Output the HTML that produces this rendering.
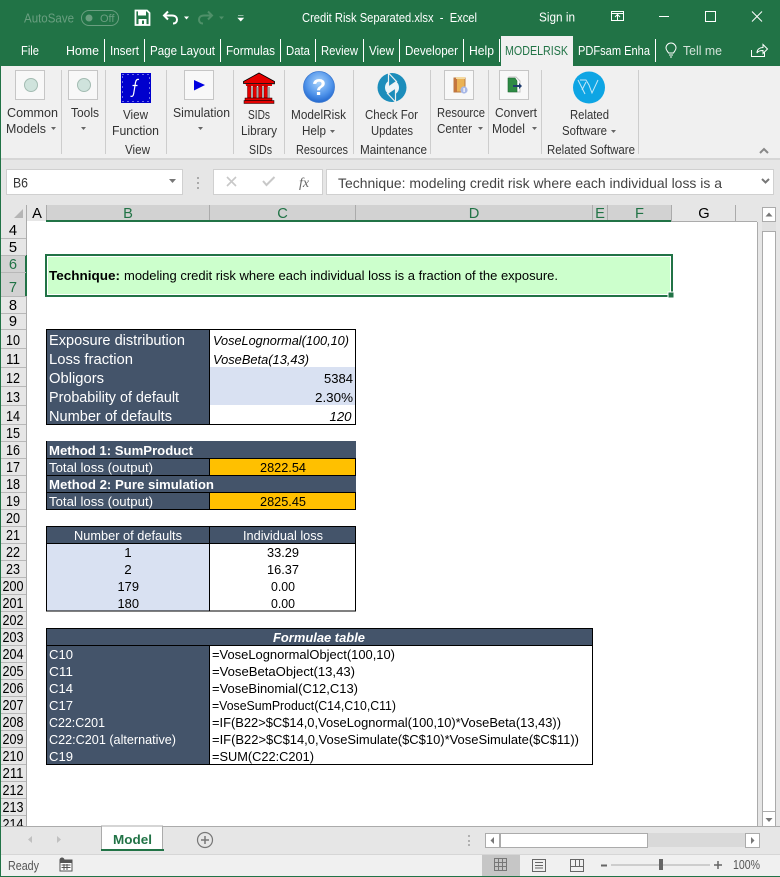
<!DOCTYPE html>
<html><head><meta charset="utf-8"><title>Credit Risk Separated.xlsx - Excel</title>
<style>
html,body{margin:0;padding:0;background:#fff;width:780px;height:877px;overflow:hidden}
svg{display:block}
text{font-family:"Liberation Sans",sans-serif;white-space:pre}
.t{fill:#fff;font-size:13px}
.rb{fill:#333;font-size:13px}
.hd{fill:#000;font-size:14.67px;text-anchor:middle}
.hs{fill:#217346;font-size:14.67px;text-anchor:middle}
.rw{fill:#000;font-size:14.67px;text-anchor:middle}
.rs{fill:#217346;font-size:14.67px;text-anchor:middle}
.w{fill:#fff;font-size:14.67px}
.w2{fill:#fff;font-size:13.33px}
.b{fill:#000;font-size:13.33px}
.m{text-anchor:middle}
.e{text-anchor:end}
</style></head><body>
<svg xmlns="http://www.w3.org/2000/svg" width="780" height="877" viewBox="0 0 780 877">
<rect width="780" height="877" fill="#fff"/>
<!-- title bar -->
<rect width="780" height="66" fill="#217346"/>
<text x="24" y="22.500" font-size="13" fill="#6a9f80" textLength="50" lengthAdjust="spacingAndGlyphs">AutoSave</text>
<rect x="81.500" y="10.500" width="37" height="15" rx="7.500" fill="none" stroke="#6a9f80"/>
<circle cx="89" cy="18" r="3.500" fill="#6a9f80"/>
<text x="100" y="22" font-size="11" fill="#6a9f80">Off</text>
<path d="M135.500 10.500h11.500l2.500 2.500v12h-14z" fill="none" stroke="#fff" stroke-width="1.800"/>
<rect x="138" y="11" width="8" height="4.500" fill="#fff"/><rect x="138.500" y="19" width="8" height="6" fill="#fff"/><rect x="142" y="20.500" width="2" height="3.500" fill="#217346"/>
<path d="M168 11.500l-4 4 4 4M164 15.500h8c3.500 0 5 2 5 4s-1 4-4 4" fill="none" stroke="#fff" stroke-width="2"/>
<path d="M184 16.500h5l-2.500 3z" fill="#fff"/>
<path d="M208 11.500l4 4-4 4M212 15.500h-8c-3.500 0-5 2-5 4s1 4 4 4" fill="none" stroke="#4f9069" stroke-width="2"/>
<path d="M219 16.500h5l-2.500 3z" fill="#4f9069"/>
<path d="M238 15.500h5.500M238 18h5.500l-2.750 3z" fill="#fff" stroke="#fff" stroke-width=".6"/>
<text x="302" y="22" class="t" textLength="175" lengthAdjust="spacingAndGlyphs">Credit Risk Separated.xlsx  -  Excel</text>
<text x="539" y="21.500" class="t" textLength="36" lengthAdjust="spacingAndGlyphs">Sign in</text>
<rect x="611.500" y="11.500" width="12" height="9" fill="none" stroke="#fff"/><path d="M611.500 13.500h12M617.500 20v-5M615 17l2.500-2.500 2.500 2.500" fill="none" stroke="#fff"/>
<rect x="659" y="16" width="10" height="1" fill="#fff"/>
<rect x="705.500" y="11.500" width="10" height="10" fill="none" stroke="#fff"/>
<path d="M752 11.500l10 10M762 11.500l-10 10" stroke="#fff" fill="none"/>
<!-- tabs -->
<text x="21" y="55" class="t" textLength="18" lengthAdjust="spacingAndGlyphs">File</text>
<text x="66" y="55" class="t" textLength="33" lengthAdjust="spacingAndGlyphs">Home</text>
<text x="110" y="55" class="t" textLength="29" lengthAdjust="spacingAndGlyphs">Insert</text>
<text x="150" y="55" class="t" textLength="65" lengthAdjust="spacingAndGlyphs">Page Layout</text>
<text x="226" y="55" class="t" textLength="49" lengthAdjust="spacingAndGlyphs">Formulas</text>
<text x="286" y="55" class="t" textLength="24" lengthAdjust="spacingAndGlyphs">Data</text>
<text x="321" y="55" class="t" textLength="37" lengthAdjust="spacingAndGlyphs">Review</text>
<text x="369" y="55" class="t" textLength="25" lengthAdjust="spacingAndGlyphs">View</text>
<text x="405" y="55" class="t" textLength="53" lengthAdjust="spacingAndGlyphs">Developer</text>
<text x="469" y="55" class="t" textLength="25" lengthAdjust="spacingAndGlyphs">Help</text>
<text x="578" y="55" class="t" textLength="72" lengthAdjust="spacingAndGlyphs">PDFsam Enha</text>
<text x="683" y="55" font-size="13" fill="#d3e3d9" textLength="39" lengthAdjust="spacingAndGlyphs">Tell me</text>
<g fill="#fff"><rect x="104" y="39" width="1" height="23"/><rect x="144" y="39" width="1" height="23"/><rect x="220" y="39" width="1" height="23"/><rect x="280" y="39" width="1" height="23"/><rect x="315" y="39" width="1" height="23"/><rect x="363" y="39" width="1" height="23"/><rect x="399" y="39" width="1" height="23"/><rect x="463" y="39" width="1" height="23"/><rect x="499" y="39" width="1" height="23"/><rect x="655" y="39" width="1" height="23"/></g>
<path d="M668.500 53c-1-2-2.500-3-2.500-5a5 5 0 0 1 10 0c0 2-1.500 3-2.500 5zM669 55h4M670 57h2" fill="none" stroke="#fff"/>
<path d="M751.500 50v6.500h13v-4M757 53c0-4 3-5.500 6-5.500v-3l4.500 4.500-4.500 4.500v-3c-3 0-5 .5-6 2.500z" fill="none" stroke="#fff"/>
<!-- ribbon -->
<rect x="0" y="66" width="780" height="92" fill="#f0f0f0"/>
<rect x="501" y="36" width="72" height="31" fill="#f0f0f0"/>
<text x="505" y="55" font-size="13" fill="#217346" textLength="63" lengthAdjust="spacingAndGlyphs">MODELRISK</text>
<rect x="0" y="158" width="780" height="2" fill="#d6d6d6"/>
<g fill="#cdcdcd"><rect x="61" y="70" width="1" height="84"/><rect x="105" y="70" width="1" height="84"/><rect x="166" y="70" width="1" height="84"/><rect x="233" y="70" width="1" height="84"/><rect x="284" y="70" width="1" height="84"/><rect x="353" y="70" width="1" height="84"/><rect x="430" y="70" width="1" height="84"/><rect x="488" y="70" width="1" height="84"/><rect x="541" y="70" width="1" height="84"/><rect x="638" y="70" width="1" height="84"/></g>
<!-- ribbon icons -->
<g fill="#f8f8f8" stroke="#c6c6c6"><rect x="15.500" y="70.500" width="29" height="29"/><rect x="68.500" y="70.500" width="29" height="29"/><rect x="184.500" y="70.500" width="29" height="29"/><rect x="444.500" y="70.500" width="29" height="29"/><rect x="499.500" y="70.500" width="29" height="29"/></g>
<circle cx="31" cy="85" r="6.500" fill="#cfe3dc" stroke="#a3bcb2"/>
<circle cx="84" cy="85" r="6.500" fill="#cfe3dc" stroke="#a3bcb2"/>
<rect x="121" y="73" width="30" height="30" fill="#0000cd"/>
<path d="M122.500 74.500h27v27h-27z" fill="none" stroke="#d8d8ff" stroke-dasharray="1 4"/>
<path d="M139 79.500c-2-.5-3 .5-3.500 3l-1.800 11c-.4 2.500-1.500 3.500-3.200 2.500M132.500 85.500h5" fill="none" stroke="#fff" stroke-width="1.200"/>
<path d="M194 80l11 5-11 5.500z" fill="#0000e0"/>
<!-- SIDs temple -->
<path d="M245 83l14-8 16 8v1.500h-30z" fill="#9a9a9a"/>
<path d="M243.500 81.500l15.500-8.500 15.500 8.500v2h-31z" fill="#e60000" stroke="#000" stroke-width=".8"/>
<rect x="246" y="84" width="26" height="2" fill="#e60000"/>
<g fill="#e60000" stroke="#600" stroke-width=".5"><rect x="247.500" y="86" width="3.500" height="12"/><rect x="253" y="86" width="3.500" height="12"/><rect x="258.500" y="86" width="3.500" height="12"/><rect x="264" y="86" width="3.500" height="12"/></g>
<g fill="#a8a8a8"><rect x="251" y="87" width="2" height="11"/><rect x="256.500" y="87" width="2" height="11"/><rect x="262" y="87" width="2" height="11"/><rect x="267.500" y="87" width="2.500" height="11"/></g>
<rect x="245" y="98" width="27" height="2.500" fill="#e60000" stroke="#000" stroke-width=".5"/><rect x="244" y="100.500" width="30" height="3" fill="#e60000" stroke="#000" stroke-width=".5"/>
<!-- help globe -->
<defs><radialGradient id="g" cx=".5" cy=".35" r=".7"><stop offset="0" stop-color="#a9d3fb"/><stop offset=".6" stop-color="#4f93ea"/><stop offset="1" stop-color="#1a5fc8"/></radialGradient></defs>
<circle cx="319" cy="87" r="15.500" fill="url(#g)" stroke="#3a78d0" stroke-width=".8"/>
<text x="319" y="95" font-size="23" font-weight="bold" fill="#fff" text-anchor="middle">?</text>
<!-- update -->
<circle cx="392" cy="87.500" r="14.500" fill="#1c8dbb"/>
<ellipse cx="392" cy="87.500" rx="7" ry="7.500" fill="#eaf5fa"/>
<path d="M388.500 73l8 8.500-8 5.500z" fill="#1c8dbb" stroke="#f0f0f0" stroke-width="1.200"/>
<path d="M395.500 102l-8-8.500 8-5.500z" fill="#1c8dbb" stroke="#f0f0f0" stroke-width="1.200"/>
<!-- book -->
<rect x="454" y="78" width="11" height="14" fill="#eab255" stroke="#b87a45"/><rect x="454" y="78" width="3" height="14" fill="#c4763f"/><rect x="456" y="77" width="9" height="2" fill="#f4d9a0"/>
<circle cx="464" cy="90" r="3.600" fill="#a8b8e8"/><rect x="463.500" y="88" width="1.200" height="4" fill="#fff"/>
<!-- convert -->
<path d="M509 77h7l4 4v11h-11z" fill="#fff" stroke="#c2c2c2"/>
<path d="M508 78h7l2 3v11h-9z" fill="#2e8b45" stroke="#1b6a30" stroke-width=".6"/>
<path d="M513 85h6v-2l3 3-3 3v-2h-6z" fill="#1f3c6e"/>
<!-- related -->
<circle cx="589" cy="87.500" r="16" fill="#0ea5e4"/>
<path d="M580 80h6l3 5 3 8 6-13M578 80l7 14M582 90l4-8" fill="none" stroke="#c4e8f8" stroke-width="1"/>
<!-- ribbon text -->
<text x="7" y="117" class="rb" textLength="51" lengthAdjust="spacingAndGlyphs">Common</text>
<text x="6" y="133" class="rb" textLength="40" lengthAdjust="spacingAndGlyphs">Models</text>
<text x="71" y="117" class="rb" textLength="28" lengthAdjust="spacingAndGlyphs">Tools</text>
<text x="123" y="119" class="rb" textLength="25" lengthAdjust="spacingAndGlyphs">View</text>
<text x="112" y="135" class="rb" textLength="47" lengthAdjust="spacingAndGlyphs">Function</text>
<text x="125" y="154" class="rb" textLength="25" lengthAdjust="spacingAndGlyphs">View</text>
<text x="173" y="117" class="rb" textLength="57" lengthAdjust="spacingAndGlyphs">Simulation</text>
<text x="248" y="119" class="rb" textLength="22" lengthAdjust="spacingAndGlyphs">SIDs</text>
<text x="241" y="135" class="rb" textLength="36" lengthAdjust="spacingAndGlyphs">Library</text>
<text x="249" y="154" class="rb" textLength="23" lengthAdjust="spacingAndGlyphs">SIDs</text>
<text x="291" y="119" class="rb" textLength="55" lengthAdjust="spacingAndGlyphs">ModelRisk</text>
<text x="302" y="135" class="rb" textLength="24" lengthAdjust="spacingAndGlyphs">Help</text>
<text x="296" y="154" class="rb" textLength="52" lengthAdjust="spacingAndGlyphs">Resources</text>
<text x="365" y="119" class="rb" textLength="53" lengthAdjust="spacingAndGlyphs">Check For</text>
<text x="371" y="135" class="rb" textLength="42" lengthAdjust="spacingAndGlyphs">Updates</text>
<text x="360" y="154" class="rb" textLength="67" lengthAdjust="spacingAndGlyphs">Maintenance</text>
<text x="437" y="117" class="rb" textLength="48" lengthAdjust="spacingAndGlyphs">Resource</text>
<text x="437" y="133" class="rb" textLength="35" lengthAdjust="spacingAndGlyphs">Center</text>
<text x="495" y="117" class="rb" textLength="42" lengthAdjust="spacingAndGlyphs">Convert</text>
<text x="492" y="133" class="rb" textLength="33" lengthAdjust="spacingAndGlyphs">Model</text>
<text x="570" y="119" class="rb" textLength="39" lengthAdjust="spacingAndGlyphs">Related</text>
<text x="562" y="135" class="rb" textLength="45" lengthAdjust="spacingAndGlyphs">Software</text>
<text x="547" y="154" class="rb" textLength="88" lengthAdjust="spacingAndGlyphs">Related Software</text>
<g fill="#666"><path d="M51 127h5l-2.500 3z"/><path d="M81 127h5l-2.500 3z"/><path d="M198 127h5l-2.500 3z"/><path d="M330 130h5l-2.500 3z"/><path d="M478 127h5l-2.500 3z"/><path d="M532 127h5l-2.500 3z"/><path d="M611 130h5l-2.500 3z"/></g>
<path d="M760 153l4-4 4 4" fill="none" stroke="#888" stroke-width="2"/>
<!-- formula bar -->
<rect x="0" y="160" width="780" height="61" fill="#e6e6e6"/>
<rect x="6.500" y="169.500" width="176" height="25" fill="#fff" stroke="#d0d0d0"/>
<text x="13" y="187.500" font-size="14" fill="#333" textLength="15" lengthAdjust="spacingAndGlyphs">B6</text>
<path d="M169 179h7l-3.500 4z" fill="#777"/>
<g fill="#aaa"><rect x="197" y="177" width="2" height="2"/><rect x="197" y="182" width="2" height="2"/><rect x="197" y="187" width="2" height="2"/></g>
<rect x="213.500" y="169.500" width="109" height="25" fill="#fff" stroke="#d0d0d0"/>
<path d="M227 177l9 9M236 177l-9 9" stroke="#c8c8c8" stroke-width="1.600" fill="none"/>
<path d="M263 181l3.500 4 8-8" stroke="#c8c8c8" stroke-width="2" fill="none"/>
<text x="299" y="187" font-size="14" font-style="italic" style="font-family:'Liberation Serif',serif" fill="#666">fx</text>
<rect x="326.500" y="169.500" width="447" height="25" fill="#fff" stroke="#d0d0d0"/>
<text x="338" y="188" font-size="14" fill="#444" textLength="384" lengthAdjust="spacingAndGlyphs">Technique: modeling credit risk where each individual loss is a</text>
<path d="M762 179l3.500 3.500 3.500-3.500" fill="none" stroke="#777" stroke-width="2"/>
<!-- column headers -->
<path d="M14 218h9v-9z" fill="#b5b5b5"/>
<rect x="46" y="205" width="625" height="15" fill="#d2d2d2"/>
<rect x="46" y="220" width="625" height="2" fill="#217346"/>
<rect x="671" y="221" width="86" height="1" fill="#ababab"/>
<g fill="#ababab"><rect x="26" y="205" width="1" height="16"/><rect x="46" y="205" width="1" height="15"/><rect x="209" y="205" width="1" height="15"/><rect x="355" y="205" width="1" height="15"/><rect x="592" y="205" width="1" height="15"/><rect x="607" y="205" width="1" height="15"/><rect x="671" y="205" width="1" height="16"/><rect x="735" y="205" width="1" height="16"/></g>
<text x="37" y="218" class="hd">A</text>
<text x="128" y="218" class="hs">B</text>
<text x="282.500" y="218" class="hs">C</text>
<text x="474" y="218" class="hs">D</text>
<text x="600" y="218" class="hs">E</text>
<text x="639.500" y="218" class="hs">F</text>
<text x="704" y="218" class="hd">G</text>
<!-- row headers -->
<rect x="1" y="221" width="25" height="606" fill="#e6e6e6"/>
<rect x="1" y="255" width="25" height="41" fill="#d2d2d2"/>
<rect x="25" y="255" width="2" height="41" fill="#217346"/>
<rect x="0" y="66" width="1" height="811" fill="#217346"/>
<path d="M1 238.500h25M1 255.500h25M1 272.500h25M1 296.500h25M1 313.500h25M1 329.500h25M1 348.500h25M1 367.500h25M1 386.500h25M1 405.500h25M1 424.500h25M1 441.500h25M1 458.500h25M1 475.500h25M1 492.500h25M1 509.500h25M1 526.500h25M1 543.500h25M1 560.500h25M1 577.500h25M1 594.500h25M1 611.500h25M1 628.500h25M1 645.500h25M1 662.500h25M1 679.500h25M1 696.500h25M1 713.500h25M1 730.500h25M1 747.500h25M1 764.500h25M1 781.500h25M1 798.500h25M1 815.500h25" stroke="#b8b8b8" fill="none"/>
<rect x="26" y="221" width="1" height="34" fill="#ababab"/><rect x="26" y="296" width="1" height="531" fill="#ababab"/>
<text x="13" y="235" class="rw">4</text><text x="13" y="252" class="rw">5</text>
<text x="13" y="269" class="rs">6</text><text x="13" y="292" class="rs">7</text>
<text x="13" y="310" class="rw">8</text><text x="13" y="326" class="rw">9</text>
<text x="13" y="345" class="rw" textLength="14" lengthAdjust="spacingAndGlyphs">10</text><text x="13" y="364" class="rw" textLength="14" lengthAdjust="spacingAndGlyphs">11</text><text x="13" y="383" class="rw" textLength="14" lengthAdjust="spacingAndGlyphs">12</text><text x="13" y="402" class="rw" textLength="14" lengthAdjust="spacingAndGlyphs">13</text><text x="13" y="421" class="rw" textLength="14" lengthAdjust="spacingAndGlyphs">14</text>
<text x="13" y="438" class="rw" textLength="14" lengthAdjust="spacingAndGlyphs">15</text><text x="13" y="455" class="rw" textLength="14" lengthAdjust="spacingAndGlyphs">16</text><text x="13" y="472" class="rw" textLength="14" lengthAdjust="spacingAndGlyphs">17</text><text x="13" y="489" class="rw" textLength="14" lengthAdjust="spacingAndGlyphs">18</text><text x="13" y="506" class="rw" textLength="14" lengthAdjust="spacingAndGlyphs">19</text><text x="13" y="523" class="rw" textLength="14" lengthAdjust="spacingAndGlyphs">20</text>
<text x="13" y="540" class="rw" textLength="14" lengthAdjust="spacingAndGlyphs">21</text><text x="13" y="557" class="rw" textLength="14" lengthAdjust="spacingAndGlyphs">22</text><text x="13" y="574" class="rw" textLength="14" lengthAdjust="spacingAndGlyphs">23</text>
<text x="13" y="591" class="rw" textLength="21" lengthAdjust="spacingAndGlyphs">200</text><text x="13" y="608" class="rw" textLength="21" lengthAdjust="spacingAndGlyphs">201</text><text x="13" y="625" class="rw" textLength="21" lengthAdjust="spacingAndGlyphs">202</text><text x="13" y="642" class="rw" textLength="21" lengthAdjust="spacingAndGlyphs">203</text><text x="13" y="659" class="rw" textLength="21" lengthAdjust="spacingAndGlyphs">204</text><text x="13" y="676" class="rw" textLength="21" lengthAdjust="spacingAndGlyphs">205</text><text x="13" y="693" class="rw" textLength="21" lengthAdjust="spacingAndGlyphs">206</text><text x="13" y="710" class="rw" textLength="21" lengthAdjust="spacingAndGlyphs">207</text><text x="13" y="727" class="rw" textLength="21" lengthAdjust="spacingAndGlyphs">208</text><text x="13" y="744" class="rw" textLength="21" lengthAdjust="spacingAndGlyphs">209</text><text x="13" y="761" class="rw" textLength="21" lengthAdjust="spacingAndGlyphs">210</text><text x="13" y="778" class="rw" textLength="21" lengthAdjust="spacingAndGlyphs">211</text><text x="13" y="795" class="rw" textLength="21" lengthAdjust="spacingAndGlyphs">212</text><text x="13" y="812" class="rw" textLength="21" lengthAdjust="spacingAndGlyphs">213</text><text x="13" y="829" class="rw" textLength="21" lengthAdjust="spacingAndGlyphs">214</text>
<!-- green box -->
<rect x="46" y="255" width="626" height="41" fill="#ccffcc" stroke="#217346" stroke-width="2"/>
<rect x="47.500" y="256.500" width="623" height="38" fill="none" stroke="#fff"/>
<rect x="668" y="292" width="6" height="6" fill="#217346" stroke="#fff"/>
<text x="49" y="280" font-size="13" font-weight="bold" fill="#000" textLength="71" lengthAdjust="spacingAndGlyphs">Technique:</text>
<text x="124" y="280" font-size="13" fill="#000" textLength="434" lengthAdjust="spacingAndGlyphs">modeling credit risk where each individual loss is a fraction of the exposure.</text>
<!-- table 1 -->
<rect x="46" y="329" width="164" height="96" fill="#44546a"/>
<rect x="210" y="367" width="145" height="38" fill="#d9e1f2"/>
<rect x="46.500" y="329.500" width="309" height="95" fill="none" stroke="#000"/>
<rect x="209" y="329" width="1" height="96" fill="#000"/>
<text x="49" y="345" class="w" textLength="136" lengthAdjust="spacingAndGlyphs">Exposure distribution</text>
<text x="49" y="364" class="w" textLength="84" lengthAdjust="spacingAndGlyphs">Loss fraction</text>
<text x="49" y="383" class="w" textLength="55" lengthAdjust="spacingAndGlyphs">Obligors</text>
<text x="49" y="402" class="w" textLength="130" lengthAdjust="spacingAndGlyphs">Probability of default</text>
<text x="49" y="421" class="w" textLength="123" lengthAdjust="spacingAndGlyphs">Number of defaults</text>
<text x="213" y="345" font-size="13.330" font-style="italic" fill="#000" textLength="136" lengthAdjust="spacingAndGlyphs">VoseLognormal(100,10)</text>
<text x="213" y="364" font-size="13.330" font-style="italic" fill="#000" textLength="96" lengthAdjust="spacingAndGlyphs">VoseBeta(13,43)</text>
<text x="324" y="383" class="b" textLength="29" lengthAdjust="spacingAndGlyphs">5384</text>
<text x="315" y="402" class="b" textLength="38" lengthAdjust="spacingAndGlyphs">2.30%</text>
<text x="329.500" y="421" class="b" font-style="italic" textLength="22" lengthAdjust="spacingAndGlyphs">120</text>
<!-- table 2 -->
<rect x="46" y="441" width="310" height="69" fill="#44546a"/>
<rect x="210" y="459" width="145" height="16" fill="#ffc000"/>
<rect x="210" y="493" width="145" height="16" fill="#ffc000"/>
<path d="M46 458.500h310M46 475.500h310M46 492.500h310M46 509.500h310M209.500 458v18M209.500 492v18" stroke="#000" fill="none"/>
<rect x="46" y="441" width="1" height="69" fill="#000"/>
<rect x="355" y="458" width="1" height="18" fill="#000"/><rect x="355" y="492" width="1" height="18" fill="#000"/>
<text x="49" y="455" font-size="13.330" font-weight="bold" fill="#fff" textLength="144" lengthAdjust="spacingAndGlyphs">Method 1: SumProduct</text>
<text x="49" y="472" class="w2" textLength="104" lengthAdjust="spacingAndGlyphs">Total loss (output)</text>
<text x="260" y="472" class="b" textLength="46" lengthAdjust="spacingAndGlyphs">2822.54</text>
<text x="49" y="489" font-size="13.330" font-weight="bold" fill="#fff" textLength="165" lengthAdjust="spacingAndGlyphs">Method 2: Pure simulation</text>
<text x="49" y="506" class="w2" textLength="104" lengthAdjust="spacingAndGlyphs">Total loss (output)</text>
<text x="260" y="506" class="b" textLength="46" lengthAdjust="spacingAndGlyphs">2825.45</text>
<!-- table 3 -->
<rect x="46" y="526" width="310" height="18" fill="#44546a"/>
<rect x="47" y="544" width="162" height="67" fill="#d9e1f2"/>
<rect x="46.500" y="526.500" width="309" height="84.500" fill="none" stroke="#000"/>
<rect x="46" y="543" width="310" height="1" fill="#000"/>
<rect x="209" y="526" width="1" height="85" fill="#000"/>
<text x="74" y="540" class="w2" textLength="108" lengthAdjust="spacingAndGlyphs">Number of defaults</text>
<text x="243" y="540" class="w2" textLength="80" lengthAdjust="spacingAndGlyphs">Individual loss</text>
<text x="128" y="557" class="b m">1</text><text x="128" y="574" class="b m">2</text>
<text x="117.500" y="591" class="b" textLength="21.500" lengthAdjust="spacingAndGlyphs">179</text><text x="117.500" y="608" class="b" textLength="21.500" lengthAdjust="spacingAndGlyphs">180</text>
<text x="267" y="557" class="b" textLength="32" lengthAdjust="spacingAndGlyphs">33.29</text><text x="267" y="574" class="b" textLength="32" lengthAdjust="spacingAndGlyphs">16.37</text><text x="271" y="591" class="b" textLength="24" lengthAdjust="spacingAndGlyphs">0.00</text><text x="271" y="608" class="b" textLength="24" lengthAdjust="spacingAndGlyphs">0.00</text>
<!-- table 4 -->
<rect x="46" y="628" width="547" height="18" fill="#44546a"/>
<rect x="47" y="646" width="162" height="118" fill="#44546a"/>
<rect x="46.500" y="628.500" width="546" height="136" fill="none" stroke="#000"/>
<rect x="46" y="645" width="547" height="1" fill="#000"/>
<rect x="209" y="645" width="1" height="120" fill="#000"/>
<text x="273" y="642" font-size="13.330" font-weight="bold" font-style="italic" fill="#fff" textLength="92" lengthAdjust="spacingAndGlyphs">Formulae table</text>
<text x="49" y="659" class="w2" textLength="24" lengthAdjust="spacingAndGlyphs">C10</text><text x="49" y="676" class="w2" textLength="24" lengthAdjust="spacingAndGlyphs">C11</text><text x="49" y="693" class="w2" textLength="24" lengthAdjust="spacingAndGlyphs">C14</text><text x="49" y="710" class="w2" textLength="24" lengthAdjust="spacingAndGlyphs">C17</text>
<text x="49" y="727" class="w2" textLength="56" lengthAdjust="spacingAndGlyphs">C22:C201</text>
<text x="49" y="744" class="w2" textLength="127" lengthAdjust="spacingAndGlyphs">C22:C201 (alternative)</text>
<text x="49" y="761" class="w2" textLength="24" lengthAdjust="spacingAndGlyphs">C19</text>
<text x="212" y="659" class="b" textLength="183" lengthAdjust="spacingAndGlyphs">=VoseLognormalObject(100,10)</text>
<text x="212" y="676" class="b" textLength="143" lengthAdjust="spacingAndGlyphs">=VoseBetaObject(13,43)</text>
<text x="212" y="693" class="b" textLength="146" lengthAdjust="spacingAndGlyphs">=VoseBinomial(C12,C13)</text>
<text x="212" y="710" class="b" textLength="184" lengthAdjust="spacingAndGlyphs">=VoseSumProduct(C14,C10,C11)</text>
<text x="212" y="727" class="b" textLength="349" lengthAdjust="spacingAndGlyphs">=IF(B22&gt;$C$14,0,VoseLognormal(100,10)*VoseBeta(13,43))</text>
<text x="212" y="744" class="b" textLength="367" lengthAdjust="spacingAndGlyphs">=IF(B22&gt;$C$14,0,VoseSimulate($C$10)*VoseSimulate($C$11))</text>
<text x="212" y="761" class="b" textLength="102" lengthAdjust="spacingAndGlyphs">=SUM(C22:C201)</text>
<!-- right scrollbar -->
<rect x="757" y="221" width="23" height="606" fill="#e6e6e6"/>
<rect x="757" y="222" width="1" height="605" fill="#ababab"/>
<rect x="762" y="222" width="14" height="605" fill="#e0e0e0"/>
<rect x="762.500" y="207.500" width="13" height="14" fill="#fff" stroke="#ababab"/>
<path d="M765.500 216.500h7l-3.500-4z" fill="#777"/>
<rect x="762.500" y="231.500" width="13" height="580" fill="#fff" stroke="#ababab"/>
<rect x="762.500" y="811.500" width="13" height="15" fill="#fff" stroke="#ababab"/>
<path d="M765.500 818h7l-3.500 4z" fill="#777"/>
<rect x="776" y="160" width="4" height="700" fill="#e6e6e6"/>
<!-- tab bar -->
<rect x="1" y="826" width="779" height="28" fill="#e6e6e6"/>
<rect x="1" y="826" width="779" height="1" fill="#ababab"/>
<path d="M32 836v7l-4-3.500zM57 836v7l4-3.500z" fill="#c0c0c0"/>
<path d="M101.500 851v-25h61v25" fill="#fff" stroke="#ababab"/>
<rect x="101" y="849" width="63" height="2" fill="#217346"/>
<text x="113" y="844" font-size="13.330" font-weight="bold" fill="#217346" textLength="39" lengthAdjust="spacingAndGlyphs">Model</text>
<circle cx="205" cy="840" r="7.500" fill="none" stroke="#777" stroke-width="1.200"/>
<path d="M201 840h8M205 836v8" stroke="#777" stroke-width="1.500"/>
<g fill="#b0b0b0"><rect x="468" y="835" width="2" height="2"/><rect x="468" y="840" width="2" height="2"/><rect x="468" y="844" width="2" height="2"/></g>
<rect x="486" y="833" width="267" height="14" fill="#d9d9d9"/>
<rect x="485.500" y="833.500" width="14" height="14" fill="#fff" stroke="#ababab"/>
<path d="M494 837v7l-3.500-3.500z" fill="#777"/>
<rect x="500.500" y="833.500" width="147" height="14" fill="#fff" stroke="#ababab"/>
<rect x="745.500" y="833.500" width="14" height="14" fill="#fff" stroke="#ababab"/>
<path d="M751 837v7l3.500-3.500z" fill="#777"/>
<!-- status bar -->
<rect x="1" y="854" width="779" height="22" fill="#f0f0f0"/>
<rect x="1" y="854" width="779" height="1" fill="#d6d6d6"/>
<rect x="0" y="876" width="780" height="1" fill="#217346"/>
<rect x="0" y="66" width="1" height="811" fill="#217346"/>
<text x="8" y="870" font-size="12.500" fill="#555" textLength="31" lengthAdjust="spacingAndGlyphs">Ready</text>
<circle cx="62" cy="860" r="2.500" fill="#555"/>
<rect x="60" y="860" width="12" height="11" fill="#fff" stroke="#555"/><path d="M61.500 865h9M61.500 867.500h9M64 864v6M67 864v6" stroke="#555" fill="none"/><rect x="60" y="860" width="12" height="3" fill="#555"/>
<rect x="482" y="855" width="38" height="21" fill="#c6c6c6"/>
<path d="M494.500 858.500h12v12h-12zM494.500 862.500h12M494.500 866.500h12M498.500 858.500v12M502.500 858.500v12" fill="none" stroke="#777"/>
<rect x="532.500" y="859.500" width="13" height="12" fill="none" stroke="#666"/><path d="M535 862.500h8M535 865.500h8M535 868h8" stroke="#666" fill="none"/>
<path d="M570.500 859.500h13v12h-13zM570.500 866.500h13M575.500 859.500v7M579.500 859.500v7" fill="none" stroke="#666"/>
<rect x="601" y="864.500" width="6" height="2" fill="#666"/>
<rect x="611" y="864.500" width="99" height="1" fill="#aaa"/>
<rect x="659" y="859" width="4" height="11" fill="#666"/>
<path d="M714 865h8M718 861v8" stroke="#666" stroke-width="1.500"/>
<text x="733" y="869" font-size="12.500" fill="#555" textLength="27" lengthAdjust="spacingAndGlyphs">100%</text>
</svg>
</body></html>
